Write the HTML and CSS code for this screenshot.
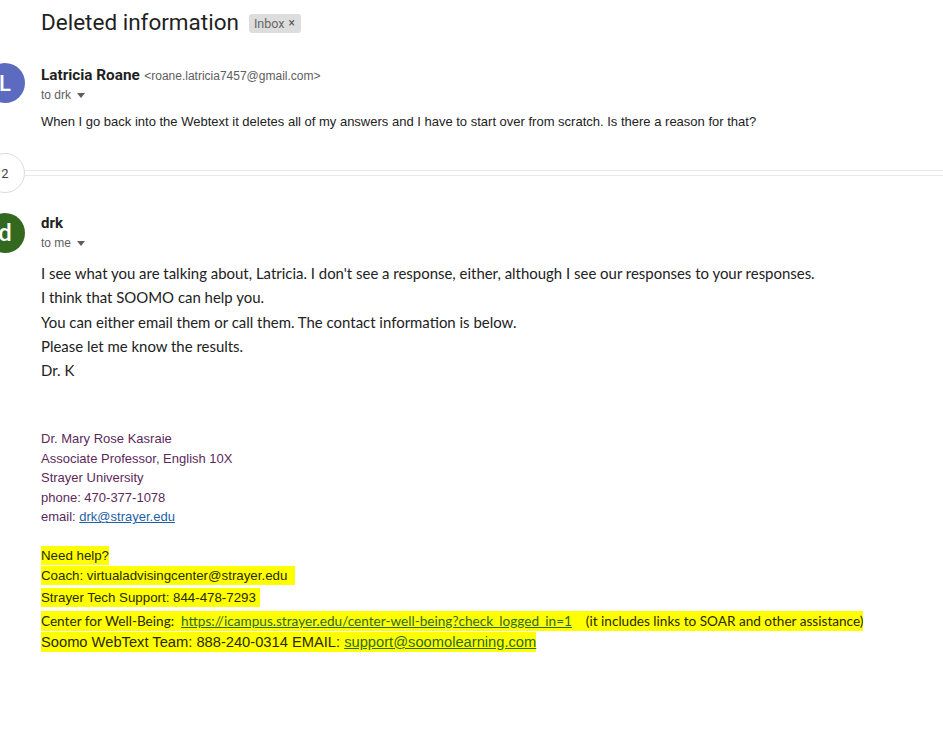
FILE: index.html
```html
<!DOCTYPE html>
<html lang="en">
<head>
<meta charset="utf-8">
<title>Deleted information</title>
<link rel="stylesheet" href="styles.css">
</head>
<body>
<div class="thread">
  <div class="subject">
    <h1 class="subject-title">Deleted information</h1>
    <span class="label">Inbox <span class="label-x">×</span></span>
  </div>

  <div class="message msg-first">
    <div class="avatar avatar-l">L</div>
    <div class="msg-main">
      <div class="sender"><span class="sender-name">Latricia Roane</span> <span class="sender-email">&lt;roane.latricia7457@gmail.com&gt;</span></div>
      <div class="recipient">to drk <svg class="caret" width="8" height="5" viewBox="0 0 8 5"><path d="M0 0h8L4 5z" fill="#5e5e5e"/></svg></div>
      <div class="body-arial">When I go back into the Webtext it deletes all of my answers and I have to start over from scratch. Is there a reason for that?</div>
    </div>
  </div>

  <div class="collapsed">
    <div class="count">2</div>
    <div class="collapsed-lines"></div>
  </div>

  <div class="message msg-second">
    <div class="avatar avatar-d">d</div>
    <div class="msg-main">
      <div class="sender"><span class="sender-name">drk</span></div>
      <div class="recipient">to me <svg class="caret" width="8" height="5" viewBox="0 0 8 5"><path d="M0 0h8L4 5z" fill="#5e5e5e"/></svg></div>
      <div class="body-calibri">
        <div>I see what you are talking about, Latricia. I don't see a response, either, although I see our responses to your responses.</div>
        <div>I think that SOOMO can help you.</div>
        <div>You can either email them or call them. The contact information is below.</div>
        <div>Please let me know the results.</div>
        <div>Dr. K</div>
      </div>
      <div class="signature">
        <div>Dr. Mary Rose Kasraie</div>
        <div>Associate Professor, English 10X</div>
        <div>Strayer University</div>
        <div>phone: 470-377-1078</div>
        <div>email: <a class="sig-link" href="#">drk@strayer.edu</a></div>
      </div>
      <div class="help">
        <div class="help-line h1"><span class="hl">Need help?</span></div>
        <div class="help-line h2"><span class="hl">Coach: virtualadvisingcenter@strayer.edu&nbsp;&nbsp;</span></div>
        <div class="help-line h3"><span class="hl">Strayer Tech Support: 844-478-7293&nbsp;</span></div>
        <div class="help-line h4 calibri"><span class="hl">Center for Well-Being:&nbsp; <a class="hl-link" href="#">https://icampus.strayer.edu/center-well-being?check_logged_in=1</a>&nbsp;&nbsp;&nbsp; (it includes links to SOAR and other assistance)</span></div>
        <div class="help-line h5"><span class="hl">Soomo WebText Team: 888-240-0314 EMAIL: <a class="hl-link" href="#">support@soomolearning.com</a></span></div>
      </div>
    </div>
  </div>
</div>
</body>
</html>
```

FILE: styles.css
```css
html, body {
  margin: 0;
  padding: 0;
  background: #ffffff;
}

body {
  font-family: "Liberation Sans", Arial, sans-serif;
  color: #222222;
  overflow: hidden;
}

.thread {
  padding-left: 41px;
}

.subject {
  display: flex;
  align-items: center;
  gap: 10px;
  padding-top: 8px;
  height: 28px;
}

.subject-title {
  margin: 0;
  font-family: Roboto, "Liberation Sans", sans-serif;
  font-weight: 400;
  font-size: 22.5px;
  line-height: 28px;
  color: #1f1f1f;
}

.label {
  display: inline-flex;
  align-items: center;
  height: 19px;
  padding: 0 6px 0 5px;
  background: #dddddd;
  border-radius: 3px;
  font-family: Roboto, "Liberation Sans", sans-serif;
  font-size: 12.5px;
  color: #666666;
  margin-top: 2px;
}

.label-x {
  margin-left: 4px;
  font-size: 12px;
  color: #555555;
}

.message {
  display: flex;
  gap: 16px;
  margin-left: -56px;
}

.msg-first {
  margin-top: 27px;
}

.avatar {
  flex: none;
  width: 40px;
  height: 40px;
  border-radius: 50%;
  color: #ffffff;
  display: flex;
  align-items: center;
  justify-content: center;
  font-family: Roboto, "Liberation Sans", sans-serif;
  font-size: 22px;
  font-weight: 500;
}

.avatar-l {
  background: #5c6bc0;
}

.avatar-d {
  background: #33691e;
  font-size: 24px;
}

.msg-main {
  padding-top: 2px;
  flex: 1;
  min-width: 0;
}

.msg-second .msg-main {
  padding-top: 0;
}

.sender {
  line-height: 20px;
  height: 20px;
  white-space: nowrap;
}

.sender-name {
  font-family: Roboto, "Liberation Sans", sans-serif;
  font-weight: 700;
  font-size: 15.3px;
  color: #1f1f1f;
}

.sender-email {
  font-size: 12px;
  color: #5e5e5e;
}

.recipient {
  display: flex;
  align-items: center;
  gap: 6px;
  line-height: 20px;
  height: 20px;
  font-size: 12px;
  color: #5e5e5e;
}

.caret {
  margin-top: 1px;
}

.body-arial {
  margin-top: 7px;
  font-size: 13px;
  line-height: 20px;
  color: #222222;
}

.collapsed {
  display: flex;
  align-items: center;
  margin-left: -56px;
  margin-top: 21px;
}

.count {
  flex: none;
  width: 38px;
  height: 38px;
  border: 1px solid #dadce0;
  border-radius: 50%;
  display: flex;
  align-items: center;
  justify-content: center;
  font-family: Roboto, "Liberation Sans", sans-serif;
  font-size: 13px;
  color: #444444;
  background: #ffffff;
}

.collapsed-lines {
  flex: 1;
  height: 4px;
  border-top: 1px solid #e8e8e8;
  border-bottom: 1px solid #e8e8e8;
}

.msg-second {
  margin-top: 20px;
}

.msg-second .sender-name {
  font-size: 15px;
}

.body-calibri {
  margin-top: 8px;
  font-family: Lato, "Liberation Sans", sans-serif;
  font-size: 14.95px;
  line-height: 24.25px;
  color: #222222;
}

.signature {
  margin-top: 47px;
  font-size: 13px;
  line-height: 19.5px;
  color: #5b2a5b;
}

.sig-link {
  color: #1f5fa6;
  text-decoration: underline;
}

.help {
  margin-top: 19px;
  font-size: 13.3px;
  color: #2a2a00;
}

.help-line {
  white-space: nowrap;
}

.h1 { line-height: 20px; }
.h2 { line-height: 20px; }
.h3 { line-height: 22px; margin-top: 1px; }
.h4 { line-height: 22px; margin-top: 1px; }
.h5 { line-height: 21px; font-size: 14.7px; }

.calibri {
  font-family: Lato, "Liberation Sans", sans-serif;
  font-size: 13.6px;
}

.hl {
  background: #ffff00;
  padding: 2px 0 2px 0;
}

.hl-link {
  color: #2f6a25;
  text-decoration: underline;
}
```
